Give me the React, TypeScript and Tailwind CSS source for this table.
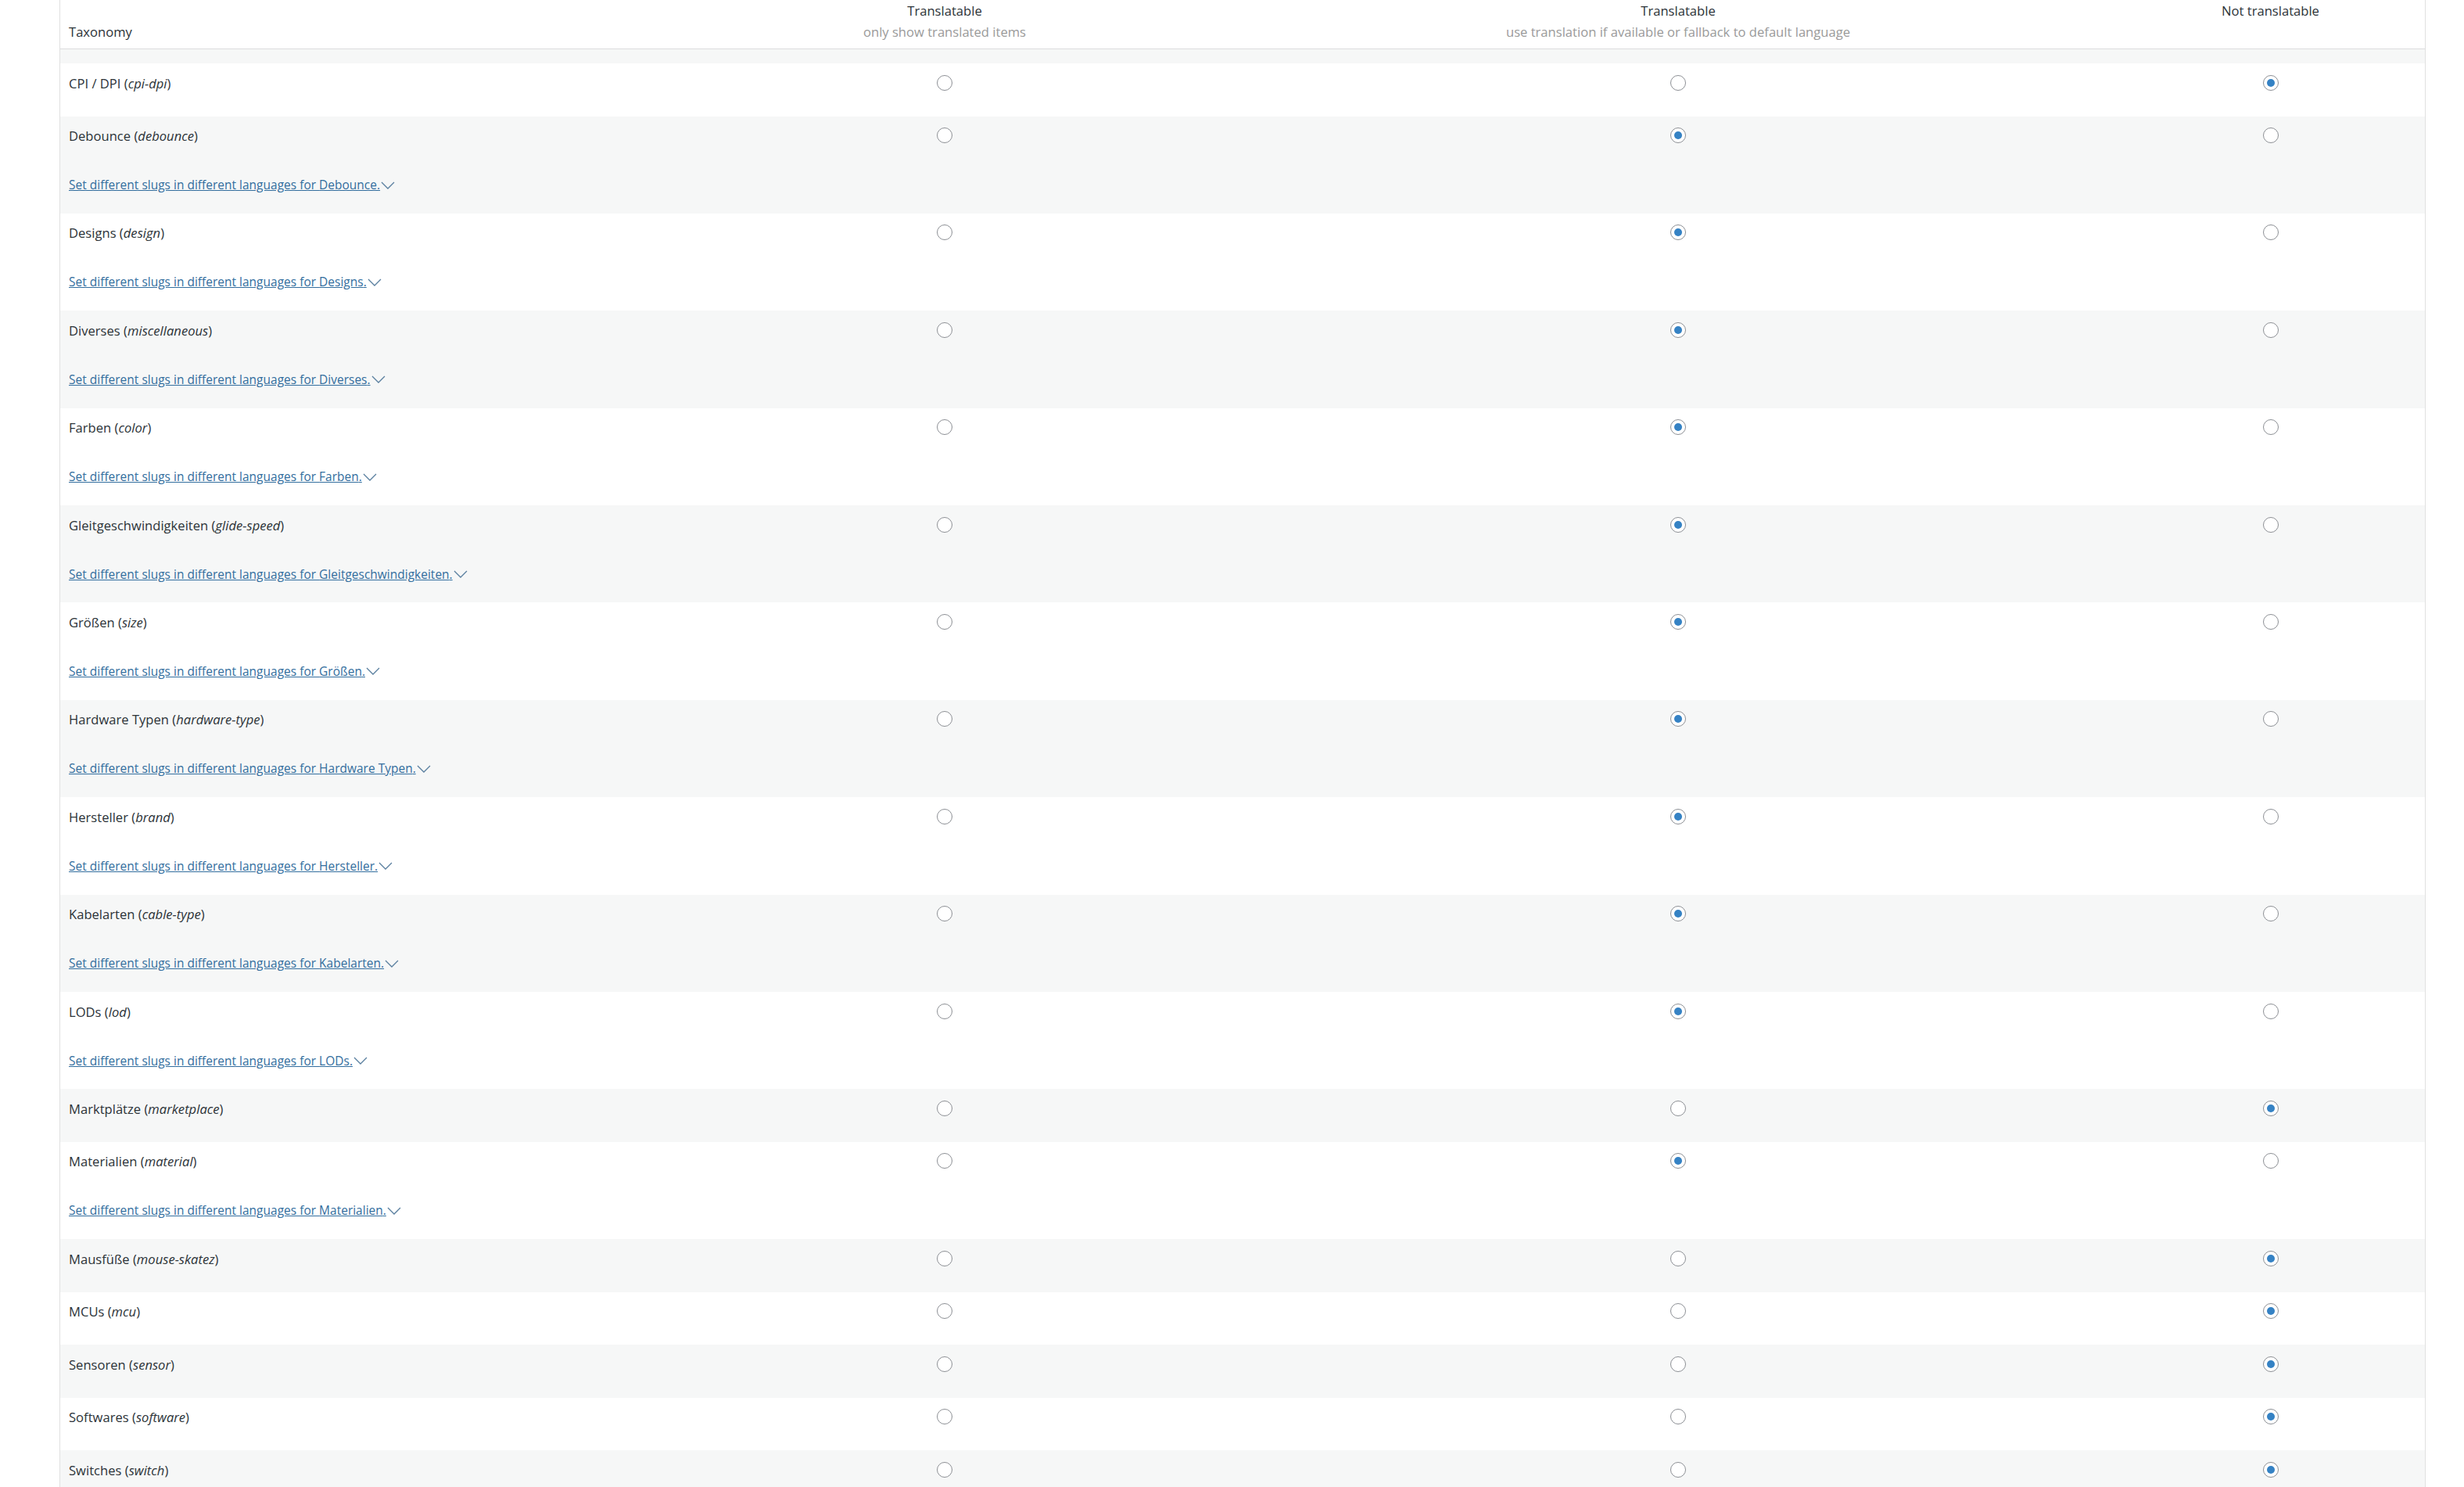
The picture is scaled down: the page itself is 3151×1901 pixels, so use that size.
import React from 'react';

interface TaxonomyRow {
  name: string;
  slug: string;
  value: number; // 0 = translated only, 1 = fallback, 2 = not translatable
  slugs: boolean;
}

const rows: TaxonomyRow[] = [
  { name: 'CPI / DPI', slug: 'cpi-dpi', value: 2, slugs: false },
  { name: 'Debounce', slug: 'debounce', value: 1, slugs: true },
  { name: 'Designs', slug: 'design', value: 1, slugs: true },
  { name: 'Diverses', slug: 'miscellaneous', value: 1, slugs: true },
  { name: 'Farben', slug: 'color', value: 1, slugs: true },
  { name: 'Gleitgeschwindigkeiten', slug: 'glide-speed', value: 1, slugs: true },
  { name: 'Größen', slug: 'size', value: 1, slugs: true },
  { name: 'Hardware Typen', slug: 'hardware-type', value: 1, slugs: true },
  { name: 'Hersteller', slug: 'brand', value: 1, slugs: true },
  { name: 'Kabelarten', slug: 'cable-type', value: 1, slugs: true },
  { name: 'LODs', slug: 'lod', value: 1, slugs: true },
  { name: 'Marktplätze', slug: 'marketplace', value: 2, slugs: false },
  { name: 'Materialien', slug: 'material', value: 1, slugs: true },
  { name: 'Mausfüße', slug: 'mouse-skatez', value: 2, slugs: false },
  { name: 'MCUs', slug: 'mcu', value: 2, slugs: false },
  { name: 'Sensoren', slug: 'sensor', value: 2, slugs: false },
  { name: 'Softwares', slug: 'software', value: 2, slugs: false },
  { name: 'Switches', slug: 'switch', value: 2, slugs: false },
];

function Radio({ checked }: { checked: boolean }) {
  return (
    <span className="flex h-5 w-5 items-center justify-center rounded-full border border-[#8c8f94] bg-white">
      {checked && <span className="h-2.5 w-2.5 rounded-full bg-[#3582c4]" />}
    </span>
  );
}

function Chevron() {
  return (
    <svg width="18" height="10" viewBox="0 0 18 10" className="ml-[1px] shrink-0">
      <polyline points="1,1 9,9 17,1" fill="none" stroke="#5a7f9f" strokeWidth="1.3" />
    </svg>
  );
}

export default function App() {
  return (
    <div className="min-h-screen bg-white font-['Open_Sans',sans-serif] text-[16.6px] text-[#2c3338]">
      <div className="ml-[76px] w-[3026px] border-x border-[#e0e0e0]">
        {/* Header */}
        <div className="grid h-[63px] grid-cols-[753px_756px_1120px_395px] border-b border-[#dcdcde] bg-white">
          <div className="pl-[11px] pt-[28.5px] leading-[23px]">Taxonomy</div>
          <div className="flex flex-col items-center pt-[1.5px]">
            <span className="leading-[23px]">Translatable</span>
            <span className="mt-[4px] leading-[23px] text-[#9a9a9a]">only show translated items</span>
          </div>
          <div className="flex flex-col items-center pt-[1.5px]">
            <span className="leading-[23px]">Translatable</span>
            <span className="mt-[4px] leading-[23px] text-[#9a9a9a]">
              use translation if available or fallback to default language
            </span>
          </div>
          <div className="flex flex-col items-center pt-[1.5px]">
            <span className="leading-[23px]">Not translatable</span>
          </div>
        </div>

        {/* hidden row */}
        <div className="h-[18px] bg-[#f6f7f7]" />

        {rows.map((row, i) => (
          <div
            key={row.slug}
            className={`grid grid-cols-[753px_756px_1120px_395px] ${
              i % 2 === 0 ? 'bg-white' : 'bg-[#f6f7f7]'
            } ${row.slugs ? 'h-[124.4px]' : 'h-[67.5px]'}`}
          >
            <div className="flex flex-col items-start pl-[11px] pt-[13.5px]">
              <div className="leading-[23px]">
                {row.name} (<em>{row.slug}</em>)
              </div>
              {row.slugs && (
                <a href="#" className="mt-[40px] flex items-center leading-[23px] text-[15.5px] text-[#336e9e]">
                  <span className="underline">Set different slugs in different languages for {row.name}.</span>
                  <Chevron />
                </a>
              )}
            </div>
            {[0, 1, 2].map((col) => (
              <div key={col} className="flex justify-center pt-[14.5px]">
                <Radio checked={row.value === col} />
              </div>
            ))}
          </div>
        ))}
      </div>
    </div>
  );
}
